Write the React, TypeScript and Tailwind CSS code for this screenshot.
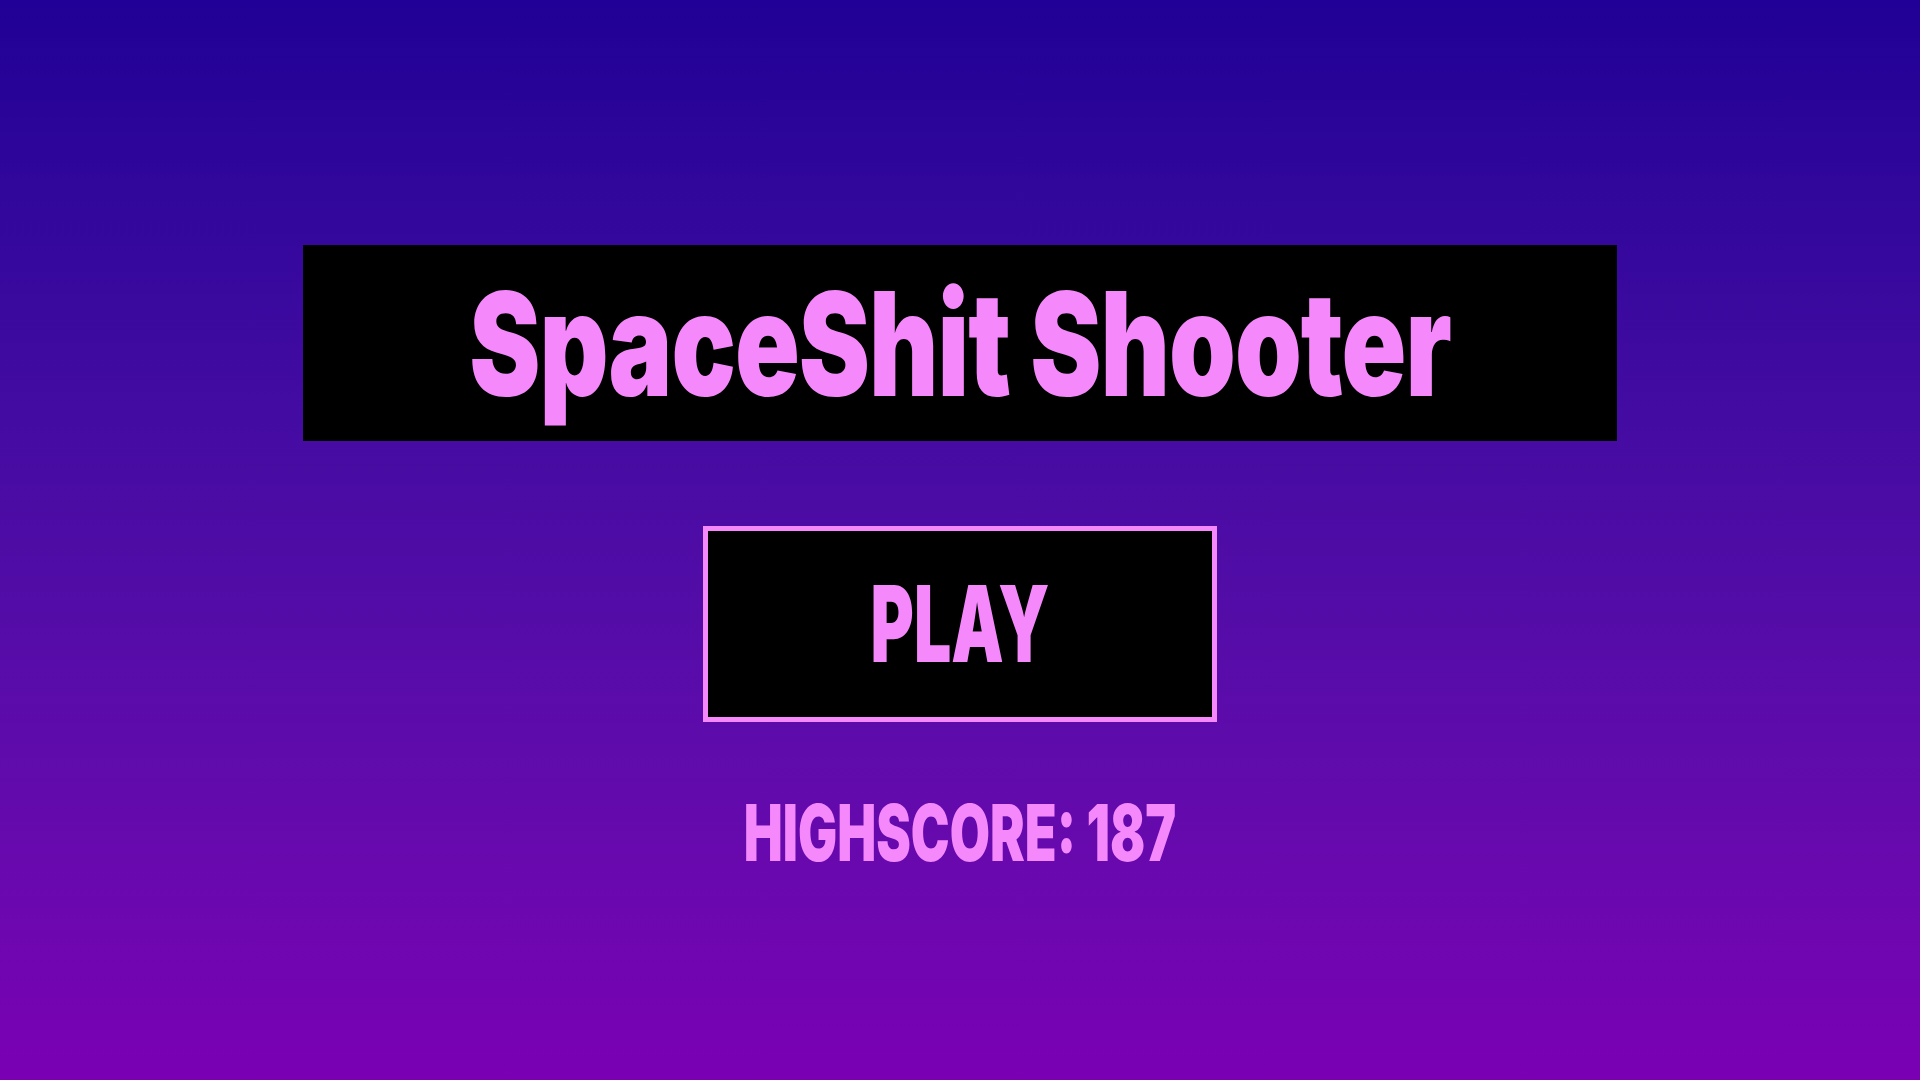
export default function App() {
  const font = { fontFamily: '"Inter", "Liberation Sans", sans-serif' };
  return (
    <div
      className="w-[1920px] h-[1080px] overflow-hidden bg-gradient-to-b from-[#200096] to-[#7a00b4] flex flex-col items-center pt-[245px]"
      style={font}
    >
      <div className="w-[1314px] h-[196px] bg-black flex items-center justify-center">
        <span className="inline-block text-[107px] font-black leading-none text-[#f588fb] scale-y-[1.345] tracking-[-1px] mt-[3px]">
          SpaceShit Shooter
        </span>
      </div>
      <button className="mt-[85px] w-[514px] h-[196px] bg-black border-[5px] border-[#f588fb] flex items-center justify-center">
        <span className="inline-block text-[66px] font-black leading-none text-[#f588fb] scale-y-[1.6]">
          PLAY
        </span>
      </button>
      <div className="mt-[82px] h-[60px] flex items-center justify-center">
        <span className="inline-block text-[52px] font-black leading-none text-[#f588fb] scale-y-[1.5]">
          HIGHSCORE: 187
        </span>
      </div>
    </div>
  );
}
